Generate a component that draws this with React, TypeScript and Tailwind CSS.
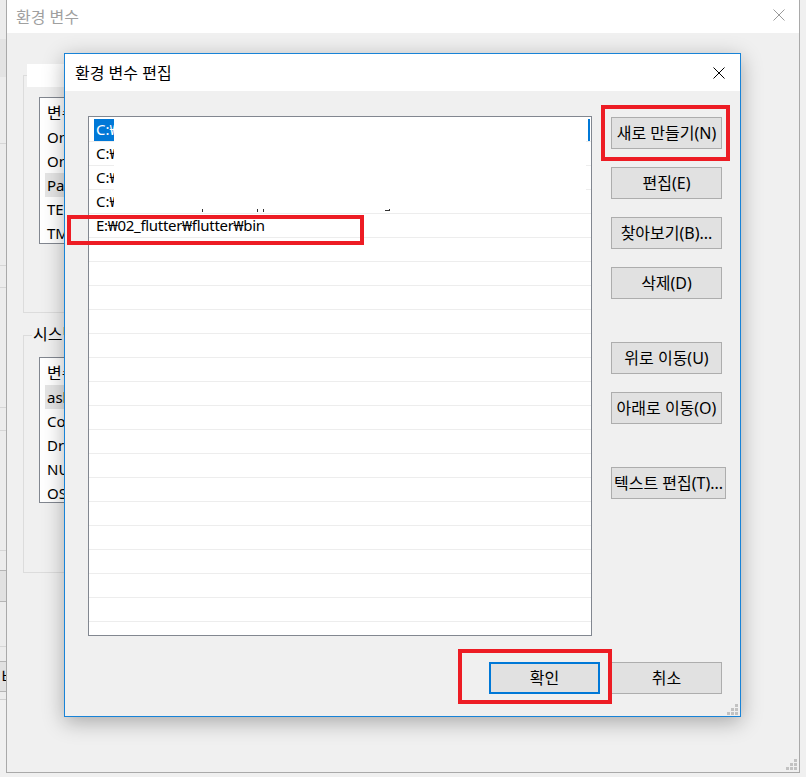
import React from "react";

const userVars = ["변수", "OneDrive", "OneDriveConsumer", "Path", "TEMP", "TMP"];
const systemVars = ["변수", "asl.log", "ComSpec", "DriverData", "NUMBER_OF_PROCESSORS", "OS"];

function CloseX({ color }: { color: string }) {
  return (
    <svg width="12" height="12" viewBox="0 0 12 12">
      <path d="M0.5 0.5 L11.5 11.5 M11.5 0.5 L0.5 11.5" stroke={color} strokeWidth="1" fill="none" />
    </svg>
  );
}

function Grip() {
  const dots = [
    [8, 0],
    [4, 4],
    [8, 4],
    [0, 8],
    [4, 8],
    [8, 8],
  ];
  return (
    <svg width="11" height="11" viewBox="0 0 11 11">
      {dots.map(([x, y]) => (
        <rect key={`${x}-${y}`} x={x} y={y} width="3" height="3" fill="#c2c2c2" />
      ))}
    </svg>
  );
}

function BehindStrip() {
  // the edge of another window peeking out on the left
  return (
    <div className="absolute left-0 top-0 w-[6px] h-[700px] bg-[#ececec] flex flex-col border-b border-[#cfcfcf]">
      <div className="h-[39px] shrink-0" />
      <div className="h-[38px] shrink-0 bg-[#e3e3e3]" />
      <div className="h-[66px] shrink-0" />
      <div className="h-px shrink-0 bg-[#d6d6d6]" />
      <div className="h-[121px] shrink-0" />
      <div className="h-px shrink-0 bg-[#d6d6d6]" />
      <div className="h-[21px] shrink-0" />
      <div className="h-px shrink-0 bg-[#d6d6d6]" />
      <div className="h-[119px] shrink-0" />
      <div className="h-px shrink-0 bg-[#d6d6d6]" />
      <div className="h-[22px] shrink-0" />
      <div className="h-px shrink-0 bg-[#d6d6d6]" />
      <div className="h-[119px] shrink-0" />
      <div className="h-px shrink-0 bg-[#d6d6d6]" />
      <div className="h-[19px] shrink-0" />
      <div className="h-[32px] shrink-0 bg-[#e1e1e1] border-y border-[#b5b5b5]" />
      <div className="h-[44px] shrink-0" />
      <div className="h-px shrink-0 bg-[#d6d6d6]" />
      <div className="h-[14px] shrink-0" />
      <div className="h-[31px] shrink-0 bg-[#e1e1e1] border-y border-[#b5b5b5] overflow-hidden flex items-center justify-end text-[16px] leading-none">
        <span className="-mr-[10px]">비</span>
      </div>
    </div>
  );
}

function BgList({ items, hi, h }: { items: string[]; hi: number; h: string }) {
  return (
    <div className={`ml-[15px] mt-[21px] w-[560px] ${h} border border-[#828790] bg-white pt-[3px] overflow-hidden text-[15px]`}>
      {items.map((t, i) => (
        <div
          key={i}
          className={`h-[24px] ml-[5px] pl-[2px] flex items-center whitespace-nowrap ${i === hi ? "bg-[#e5e5e5]" : ""}`}
        >
          <span className={i === 0 ? "text-[16px]" : ""}>{t}</span>
        </div>
      ))}
    </div>
  );
}

function EnvWindow() {
  return (
    <div className="absolute left-[6px] top-0 w-[794px] h-[773px] border-x border-b border-[#a9a9a9] bg-[#f0f0f0] flex flex-col">
      <div className="h-[33px] shrink-0 bg-white flex items-center justify-between pl-[9px] pr-[14px]">
        <span className="text-[#a0a0a0] text-[16px]">환경 변수</span>
        <span className="mb-[3px] flex">
          <CloseX color="#9a9a9a" />
        </span>
      </div>
      <div className="pl-[16px] flex flex-col">
        <div className="relative mt-[42px] h-[238px] w-[700px] border border-[#dcdcdc] flex flex-col">
          <div className="absolute left-[3px] -top-[12px] w-[300px] h-[23px] bg-white" />
          <BgList items={userVars} hi={3} h="h-[147px]" />
        </div>
        <div className="relative mt-[22px] h-[238px] w-[700px] border border-[#dcdcdc] flex flex-col">
          <span className="absolute left-[8px] -top-[13px] h-[22px] px-px bg-[#f0f0f0] flex items-center text-[16px] whitespace-nowrap">
            시스템 변수
          </span>
          <BgList items={systemVars} hi={1} h="h-[146px]" />
        </div>
      </div>
      <div className="absolute right-[2px] bottom-[2px] flex">
        <Grip />
      </div>
    </div>
  );
}

function Btn({
  children,
  className = "",
  wide = false,
  primary = false,
}: {
  children: React.ReactNode;
  className?: string;
  wide?: boolean;
  primary?: boolean;
}) {
  return (
    <button
      className={`h-[32px] shrink-0 ${wide ? "w-[115px]" : "w-[111px]"} ${
        primary ? "border-2 border-[#0078d7]" : "border border-[#adadad]"
      } bg-[#e1e1e1] flex items-center justify-center text-[16px] leading-none text-black whitespace-nowrap ${className}`}
    >
      {children}
    </button>
  );
}

function PathList() {
  const rows = Array.from({ length: 22 }, (_, i) => i);
  return (
    <div className="relative w-[504px] h-[520px] shrink-0 border border-[#828790] bg-white pt-px overflow-hidden text-[15px]">
      {rows.map((i) => (
        <div key={i} className="relative h-[24px] border-b border-[#ededed] flex items-center justify-between">
          {i === 0 && (
            <>
              <div className="ml-[5px] h-[22px] w-[20px] pl-[2px] bg-[#0078d7] text-white overflow-hidden whitespace-nowrap flex items-center">
                C:₩Windows
              </div>
              <div className="mr-px h-[22px] w-[2px] bg-[#0078d7]" />
            </>
          )}
          {i > 0 && i < 4 && (
            <div className="ml-[5px] w-[20px] pl-[2px] overflow-hidden whitespace-nowrap">C:₩Windows</div>
          )}
          {i === 3 && (
            <>
              <span className="absolute left-[113px] top-[19px] w-px h-[3px] bg-[#333]" />
              <span className="absolute left-[168px] top-[19px] w-px h-[3px] bg-[#333]" />
              <span className="absolute left-[174px] top-[19px] w-px h-[3px] bg-[#333]" />
              <span className="absolute left-[296px] top-[20px] w-[5px] h-px bg-[#333]" />
              <span className="absolute left-[300px] top-[19px] w-px h-px bg-[#333]" />
            </>
          )}
          {i === 4 && (
            <div className="ml-[5px] pl-[2px] whitespace-nowrap tracking-[-0.3px]">E:₩02_flutter₩flutter₩bin</div>
          )}
        </div>
      ))}
      {/* painted-over part of the first entries */}
      <div className="absolute left-[25px] top-0 w-[472px] h-[92px] bg-white" />
    </div>
  );
}

function EditDialog() {
  return (
    <div className="absolute left-[64px] top-[53px] w-[677px] h-[664px] border border-[#1883d7] bg-[#f0f0f0] flex flex-col shadow-[0_5px_20px_rgba(0,0,0,0.3)]">
      <div className="h-[37px] shrink-0 bg-white flex items-center justify-between pl-[10px] pr-[15px]">
        <span className="text-[16px]">환경 변수 편집</span>
        <CloseX color="#000000" />
      </div>
      <div className="flex pl-[23px] pt-[25px]">
        <PathList />
        <div className="ml-[19px] pt-px flex flex-col">
          <Btn>새로 만들기(N)</Btn>
          <Btn className="mt-[18px]">편집(E)</Btn>
          <Btn className="mt-[18px]">찾아보기(B)...</Btn>
          <Btn className="mt-[18px]">삭제(D)</Btn>
          <Btn className="mt-[43px]">위로 이동(U)</Btn>
          <Btn className="mt-[18px]">아래로 이동(O)</Btn>
          <Btn className="mt-[43px]" wide>
            텍스트 편집(T)...
          </Btn>
        </div>
      </div>
      <div className="flex justify-end gap-[11px] pr-[18px] mt-[26px]">
        <Btn primary>확인</Btn>
        <Btn>취소</Btn>
      </div>
      <div className="absolute right-[2px] bottom-px flex">
        <Grip />
      </div>
    </div>
  );
}

export default function App() {
  return (
    <div className="relative w-[806px] h-[777px] overflow-hidden bg-[#f0f0f0] font-['Noto_Sans','Noto_Sans_CJK_KR',sans-serif] text-[15px] text-black">
      <BehindStrip />
      <EnvWindow />
      <EditDialog />
      {/* red annotation boxes */}
      <div className="absolute left-[67px] top-[215px] w-[297px] h-[30px] border-4 border-[#ed1c24]" />
      <div className="absolute left-[601px] top-[105px] w-[129px] h-[56px] border-4 border-[#ed1c24]" />
      <div className="absolute left-[458px] top-[649px] w-[154px] h-[55px] border-4 border-[#ed1c24]" />
    </div>
  );
}
